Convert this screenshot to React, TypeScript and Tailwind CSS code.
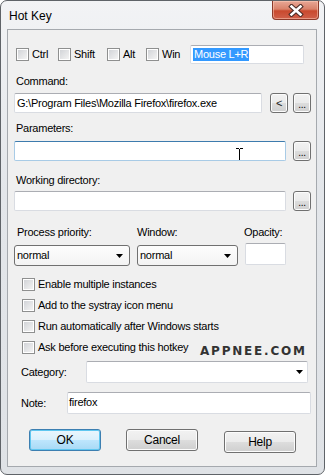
import React from "react";

const F = "font-['Liberation_Sans',Arial,sans-serif] text-[11px] leading-[13px] tracking-[-0.25px] text-black";

function Check({ label, w }: { label: string; w?: string }) {
  return (
    <div className={`flex items-center ${w ?? ""}`}>
      <div className="w-[13px] h-[13px] border border-[#8e8f8f] bg-white p-[1px] shrink-0">
        <div className="w-full h-full bg-[linear-gradient(135deg,#d2d4d8,#f3f3f3)]" />
      </div>
      <span className="ml-[3px] whitespace-nowrap">{label}</span>
    </div>
  );
}

function TBox({
  w,
  h = "h-[20px]",
  focus,
  children,
  extra,
}: {
  w: string;
  h?: string;
  focus?: boolean;
  children?: React.ReactNode;
  extra?: string;
}) {
  return (
    <div
      className={`relative ${w} ${h} rounded-[2px] bg-white border flex items-center pl-[2px] whitespace-nowrap overflow-hidden ${
        focus
          ? "border-[#a8cbe6] border-t-[#3d7bad]"
          : "border-[#d9dce2] border-t-[#abadb3]"
      } ${extra ?? ""}`}
    >
      {children}
    </div>
  );
}

function SmallBtn({ children, w = "w-[18px]" }: { children: React.ReactNode; w?: string }) {
  return (
    <div
      className={`${w} h-[20px] rounded-[3px] border border-[#707070] bg-[linear-gradient(#f2f2f2_0%,#ebebeb_50%,#dddddd_50%,#cfcfcf_100%)] flex items-center justify-center shadow-[inset_0_0_0_1px_#fcfcfc]`}
    >
      {children}
    </div>
  );
}

function Btn({ label, def, extra }: { label: string; def?: boolean; extra?: string }) {
  return (
    <div
      className={`w-[72px] h-[22px] rounded-[3px] border flex items-center justify-center ${
        def
          ? "border-[#3c7fb1] bg-[linear-gradient(#eaf6fd_0%,#d9f0fc_50%,#bee6fd_50%,#a7d9f5_100%)] shadow-[inset_0_0_0_1px_#5fc7f0]"
          : "border-[#707070] bg-[linear-gradient(#f2f2f2_0%,#ebebeb_50%,#dddddd_50%,#cfcfcf_100%)] shadow-[inset_0_0_0_1px_#fcfcfc]"
      } ${extra ?? ""}`}
    >
      <span className="text-[12px]">{label}</span>
    </div>
  );
}

function Arrow() {
  return (
    <svg width="7" height="4" viewBox="0 0 7 4" className="shrink-0">
      <polygon points="0,0 7,0 3.5,4" fill="#000" />
    </svg>
  );
}

function Drop({ w, value }: { w: string; value: string }) {
  return (
    <div
      className={`${w} h-[21px] rounded-[3px] border border-[#707070] bg-[linear-gradient(#fdfdfd,#f3f3f3)] flex items-center pl-[2px] pr-[6px] justify-between`}
    >
      <span>{value}</span>
      <Arrow />
    </div>
  );
}

export default function App() {
  return (
    <div className="w-[325px] h-[475px] bg-white">
      <div
        className={`w-[325px] h-[475px] rounded-[7px] border border-[#5f6368] bg-[linear-gradient(180deg,#f2f3f5_0%,#e3e6ea_40%,#dfe2e6_100%)] flex flex-col ${F}`}
      >
        {/* Title bar */}
        <div className="h-[28px] flex items-start shrink-0">
          <span className="ml-[8px] mt-[8px] text-[12px] leading-[14px] tracking-normal text-black">Hot Key</span>
          <div className="ml-auto mr-[5px] w-[47px] h-[19px] rounded-b-[4px] border border-t-0 border-[#8c3a2a] bg-[linear-gradient(#e8a796_0%,#d9826a_45%,#c9492e_55%,#d0604a_100%)] flex items-center justify-center shadow-[inset_0_0_0_1px_rgba(255,210,190,0.5)]">
            <svg width="16" height="13" viewBox="0 0 16 13">
              <path
                d="M3.5 2.5 L12.5 10.5 M12.5 2.5 L3.5 10.5"
                stroke="#4a2a24"
                strokeWidth="4.6"
                strokeLinecap="square"
                fill="none"
              />
              <path
                d="M3.5 2.5 L12.5 10.5 M12.5 2.5 L3.5 10.5"
                stroke="#ffffff"
                strokeWidth="2.6"
                strokeLinecap="square"
                fill="none"
              />
            </svg>
          </div>
        </div>

        {/* Client */}
        <div className="ml-[6px] mr-[7px] mb-[7px] flex-1 border border-[#a5a9ae] bg-[#f0f0f0] flex flex-col">
          {/* Row 1 */}
          <div className="mt-[15px] h-[19px] pl-[8px] flex items-center">
            <Check label="Ctrl" w="w-[42px]" />
            <Check label="Shift" w="w-[49px]" />
            <Check label="Alt" w="w-[39px]" />
            <Check label="Win" w="w-[44px]" />
            <TBox w="w-[114px]" h="h-[19px]">
              <span className="bg-[#3399ff] text-white px-[1px] leading-[13px]">Mouse L+R</span>
            </TBox>
          </div>

          <div className="mt-[11px] pl-[8px]">Command:</div>
          <div className="mt-[5px] pl-[6px] flex items-center">
            <TBox w="w-[248px]">G:\Program Files\Mozilla Firefox\firefox.exe</TBox>
            <div className="ml-[8px]">
              <SmallBtn>
                <span className="text-[11px] leading-[11px] text-[#1a1a1a]">&lt;</span>
              </SmallBtn>
            </div>
            <div className="ml-[5px]">
              <SmallBtn>
                <span className="text-[10px] leading-[10px] mt-[3px]">...</span>
              </SmallBtn>
            </div>
          </div>

          <div className="mt-[9px] pl-[8px]">Parameters:</div>
          <div className="mt-[6px] pl-[6px] flex items-center">
            <TBox w="w-[272px]" focus>
              <svg width="9" height="15" viewBox="0 0 9 15" className="absolute left-[220px] top-[6px]">
                <path d="M1 0.5 H4 M5 0.5 H8 M4.5 1 V14 M1 14.5 H4 M5 14.5 H8" stroke="#000" strokeWidth="1" fill="none" />
              </svg>
            </TBox>
            <div className="ml-[7px]">
              <SmallBtn>
                <span className="text-[10px] leading-[10px] mt-[3px]">...</span>
              </SmallBtn>
            </div>
          </div>

          <div className="mt-[13px] pl-[8px]">Working directory:</div>
          <div className="mt-[4px] pl-[6px] flex items-center">
            <TBox w="w-[272px]" />
            <div className="ml-[7px]">
              <SmallBtn>
                <span className="text-[10px] leading-[10px] mt-[3px]">...</span>
              </SmallBtn>
            </div>
          </div>

          <div className="mt-[15px] flex">
            <span className="ml-[9px] w-[120px]">Process priority:</span>
            <span className="w-[107px]">Window:</span>
            <span>Opacity:</span>
          </div>
          <div className="mt-[4px] pl-[6px] flex items-start">
            <div className="mt-[2px]">
              <Drop w="w-[116px]" value="normal" />
            </div>
            <div className="mt-[2px] ml-[7px]">
              <Drop w="w-[101px]" value="normal" />
            </div>
            <div className="ml-[7px]">
              <TBox w="w-[41px]" h="h-[22px]" />
            </div>
          </div>

          <div className="mt-[8px] pl-[14px] flex flex-col">
            <div className="h-[21px] flex items-center">
              <Check label="Enable multiple instances" />
            </div>
            <div className="h-[21px] flex items-center">
              <Check label="Add to the systray icon menu" />
            </div>
            <div className="h-[21px] flex items-center">
              <Check label="Run automatically after Windows starts" />
            </div>
            <div className="h-[21px] flex items-center relative">
              <Check label="Ask before executing this hotkey" />
              <span className="absolute left-[178px] top-[8px] font-['DejaVu_Sans',sans-serif] font-semibold text-[12px] leading-[12px] tracking-[1.8px] text-[#333]">
                APPNEE.COM
              </span>
            </div>
          </div>

          <div className="mt-[3px] flex items-center">
            <span className="ml-[13px] w-[65px]">Category:</span>
            <div className="w-[222px] h-[22px] rounded-[2px] bg-white border border-[#d9dce2] border-t-[#abadb3] flex items-center justify-end pr-[4px]">
              <Arrow />
            </div>
          </div>

          <div className="mt-[9px] flex items-center">
            <span className="ml-[13px] w-[46px]">Note:</span>
            <div className="w-[244px] h-[22px] rounded-[2px] bg-white border border-[#d9dce2] border-t-[#abadb3] pl-[1px] pt-[3px]">
              firefox
            </div>
          </div>

          <div className="mt-[15px] pl-[21px] flex items-start">
            <Btn label="OK" def />
            <div className="ml-[25px]">
              <Btn label="Cancel" />
            </div>
            <div className="ml-[26px] mt-[2px]">
              <Btn label="Help" />
            </div>
          </div>
        </div>
      </div>
    </div>
  );
}
